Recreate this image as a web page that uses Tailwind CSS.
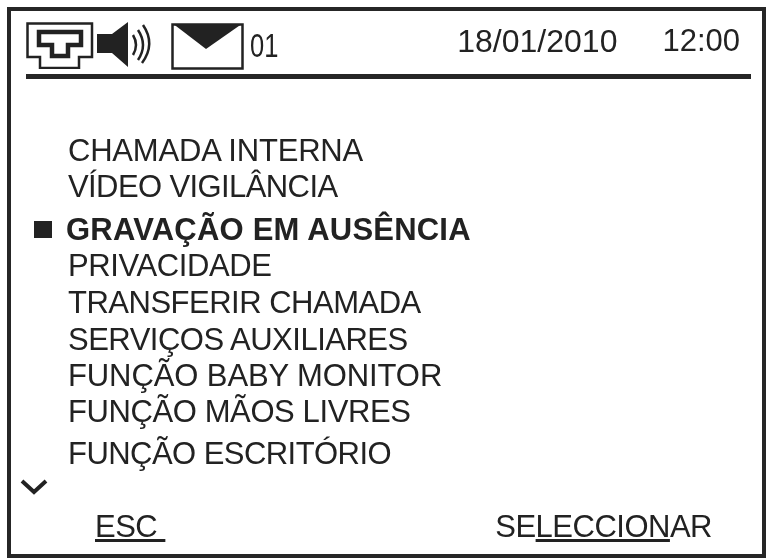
<!DOCTYPE html>
<html lang="en">

<head>
  <meta charset="UTF-8">
  <title>Menu</title>
  <script src="https://cdn.jsdelivr.net/npm/@tailwindcss/browser@4"></script>
</head>

<body class="w-[768px] h-[559px] bg-white overflow-hidden">
  <div class="ml-[7px] mt-[7px] w-[759px] h-[551px] border-[4px] border-[#262626] font-['Liberation_Sans',sans-serif] text-[#222] flex flex-col blur-[0.4px]">
    <header class="ml-[15px] mr-[11px] h-[68px] border-b-[5px] border-[#262626] flex items-start">
      <!-- network + speaker -->
      <svg class="mt-[10px] shrink-0" width="132" height="48" viewBox="0 0 132 48" fill="none" stroke="#222">
        <path d="M1.500 2.500H66V36H53V47H14V36H1.500Z" stroke-width="2.500" />
        <path d="M13 11H55V24H42V35H26V24H13Z" stroke-width="4.500" />
        <path d="M71 13H86L102 1V46L86 32H71Z" fill="#222" stroke="none" />
        <path d="M107 14Q113 24 107 34M112 9Q122 24 112 39M117 4Q130 23 116 42" stroke-width="2.500" />
      </svg>
      <svg class="ml-[13px] mt-[12px] shrink-0" width="73" height="47" viewBox="0 0 73 47" fill="none">
        <path d="M1.500 1.500H71.500V45.500H1.500Z" stroke="#222" stroke-width="2.500" />
        <path d="M3 1.500H70L35 26Z" fill="#222" />
      </svg>
      <span class="ml-[6px] mt-[16px] text-[34px] leading-[36px] scale-x-75 origin-left">01</span>
      <span class="ml-auto mt-[12px] text-[32px] leading-[36px]">18/01/2010</span>
      <span class="ml-[45px] mr-[11px] mt-[12px] text-[31px] leading-[36px]">12:00</span>
    </header>

    <ul class="ml-[57px] mt-[54px] text-[31px] leading-[36px] whitespace-nowrap">
      <li class="tracking-[-0.2px]">CHAMADA INTERNA</li>
      <li class="tracking-[-0.6px]">VÍDEO VIGILÂNCIA</li>
      <li class="relative -ml-[2px] mt-[7px] font-bold tracking-[0.2px]">
        <span class="absolute -left-[32px] top-[9px] w-[18px] h-[17px] bg-[#222]"></span>
        GRAVAÇÃO EM AUSÊNCIA
      </li>
      <li class="tracking-[-0.4px]">PRIVACIDADE</li>
      <li class="mt-px tracking-[-0.5px]">TRANSFERIR CHAMADA</li>
      <li class="mt-px tracking-[-0.5px]">SERVIÇOS AUXILIARES</li>
      <li class="tracking-[-0.1px]">FUNÇÃO BABY MONITOR</li>
      <li class="tracking-[-0.4px]">FUNÇÃO MÃOS LIVRES</li>
      <li class="mt-[6px] tracking-[-0.55px]">FUNÇÃO ESCRITÓRIO</li>
    </ul>

    <svg class="ml-[8px] mt-[6px]" width="30" height="18" viewBox="0 0 30 18" fill="none">
      <path d="M3 3L15 14L27 3" stroke="#222" stroke-width="4" />
    </svg>

    <footer class="ml-[84px] mr-[50px] mt-[13px] flex justify-between text-[31px] leading-[36px] tracking-[-0.5px]">
      <span class="underline decoration-[3px] underline-offset-[2px] whitespace-pre pr-[2px]">ESC </span>
      <span>SE<span class="underline decoration-[3px] underline-offset-[2px]">LECCION</span>AR</span>
    </footer>
  </div>
</body>

</html>
